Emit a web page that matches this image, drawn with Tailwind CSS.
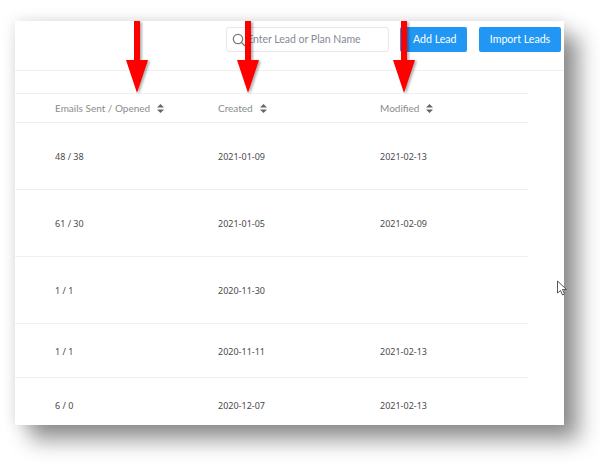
<!DOCTYPE html>
<html>
<head>
<meta charset="utf-8">
<script src="https://cdn.jsdelivr.net/npm/@tailwindcss/browser@4"></script>
</head>
<body class="bg-white m-0">
<div class="w-[600px] h-[467px] overflow-hidden pt-[21px] pl-[15px] font-['Noto_Sans','Open_Sans',sans-serif]">
  <div class="relative w-[549px] h-[404px] bg-white shadow-[15px_15px_20px_rgba(0,0,0,0.42),0_0_14px_rgba(0,0,0,0.12)]">
    <div class="h-[50px] border-b border-[#f0f0f0] flex items-start pt-[6px] pl-[211px] font-['Lato',sans-serif]">
      <div class="w-[163px] h-[25px] border border-[#e4e7ed] rounded-[3px] flex items-center pl-[5px] gap-[1px] text-[10.500px] text-[#858a94] whitespace-nowrap">
        <svg class="w-[14px] h-[14px] shrink-0" viewBox="0 0 14 14" fill="none" stroke="#777" stroke-width="1.2"><circle cx="6" cy="6" r="4.7"/><path d="M9.500 9.500 13 13"/></svg>
        <span>Enter Lead or Plan Name</span>
      </div>
      <div class="w-[67px] h-[25px] ml-[11px] bg-[#2196f3] rounded-[2px] text-white text-[10.600px] flex items-center pl-[13px]">Add Lead</div>
      <div class="w-[82px] h-[25px] ml-[12px] bg-[#2196f3] rounded-[2px] text-white text-[10.600px] flex items-center justify-center">Import Leads</div>
    </div>
    <div class="w-[513px] mt-[22px] text-[9px] text-[#4a4a4a]">
      <div class="h-[30px] pt-[1px] border-y border-[#f0f0f0] flex items-center text-[10px] text-[#8c8c8c] font-['Lato',sans-serif]">
        <div class="w-[203px] pl-[40px] flex items-center gap-[7px]">Emails Sent / Opened <svg width="7" height="9" viewBox="0 0 7 9" fill="#666"><path d="M3.500 0 7 3.600H0zM3.500 9 0 5.400h7z"/></svg></div>
        <div class="w-[162px] flex items-center gap-[7px]">Created <svg width="7" height="9" viewBox="0 0 7 9" fill="#666"><path d="M3.500 0 7 3.600H0zM3.500 9 0 5.400h7z"/></svg></div>
        <div class="flex items-center gap-[7px]">Modified <svg width="7" height="9" viewBox="0 0 7 9" fill="#666"><path d="M3.500 0 7 3.600H0zM3.500 9 0 5.400h7z"/></svg></div>
      </div>
      <div class="h-[67px] pt-[1px] border-b border-[#f0f0f0] flex items-center"><div class="w-[203px] pl-[40px]">48 / 38</div><div class="w-[162px]">2021-01-09</div><div>2021-02-13</div></div>
      <div class="h-[67px] pt-[1px] border-b border-[#f0f0f0] flex items-center"><div class="w-[203px] pl-[40px]">61 / 30</div><div class="w-[162px]">2021-01-05</div><div>2021-02-09</div></div>
      <div class="h-[67px] pt-[1px] border-b border-[#f0f0f0] flex items-center"><div class="w-[203px] pl-[40px]">1 / 1</div><div class="w-[162px]">2020-11-30</div><div></div></div>
      <div class="h-[54px] pt-[2px] border-b border-[#f0f0f0] flex items-center"><div class="w-[203px] pl-[40px]">1 / 1</div><div class="w-[162px]">2020-11-11</div><div>2021-02-13</div></div>
      <div class="h-[47px] pt-[8px] flex items-center"><div class="w-[203px] pl-[40px]">6 / 0</div><div class="w-[162px]">2020-12-07</div><div>2021-02-13</div></div>
    </div>
    <svg class="absolute left-[105px] top-0" width="300" height="76" viewBox="0 0 300 76" style="filter:drop-shadow(2px 1px 1px rgba(0,0,0,.3))" fill="#ff0000">
      <path d="M14 0h6v39h8L17 72 6 39h8z"/>
      <path d="M125 0h6v39h8L128 72 117 39h8z"/>
      <path d="M281 0h6v39h8L284 72 273 39h8z"/>
    </svg>
    <svg class="absolute left-[541px] top-[259px]" width="12" height="17" viewBox="0 0 12 17" fill="#fff" stroke="#555" stroke-width="1"><path d="M1.500 1v12l3-2.500 2 4.500 2-1-2-4.500h4z"/></svg>
  </div>
</div>
</body>
</html>
